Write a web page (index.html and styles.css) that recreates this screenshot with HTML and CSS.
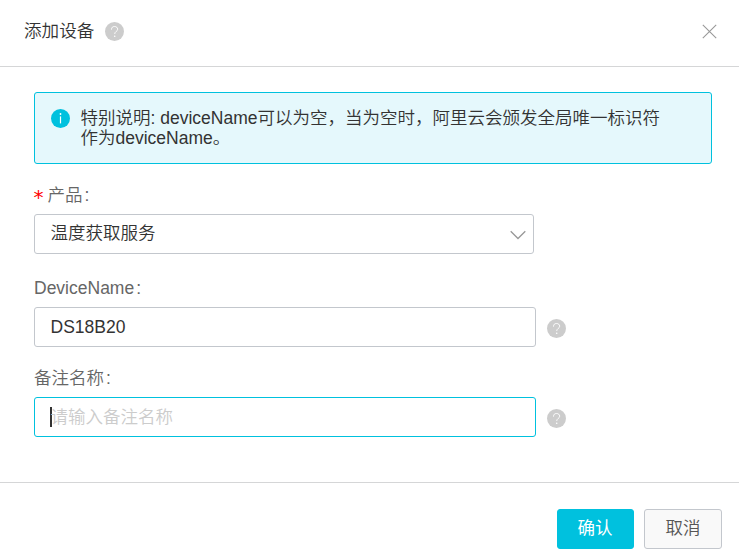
FILE: index.html
```html
<!DOCTYPE html>
<html lang="zh-CN">
<head>
<meta charset="utf-8">
<title>添加设备</title>
<link rel="stylesheet" href="styles.css">
</head>
<body>
<svg class="defs" width="0" height="0" aria-hidden="true">
  <symbol id="help" viewBox="0 0 19 19">
    <circle cx="9.5" cy="9.5" r="9.5" fill="#ccc"/>
    <path d="M6.5 7.6C6.500 5.500 7.700 4.500 9.500 4.500s3.200 1.100 3.200 2.700c0 2-3 2.500-3 4.700" fill="none" stroke="#fff" stroke-width="1"/>
    <circle cx="9.7" cy="14.300" r=".8" fill="#fff"/>
  </symbol>
</svg>
<div class="dialog">
  <header class="header">
    <h1 class="title">添加设备</h1>
    <svg class="help"><use href="#help"/></svg>
    <svg class="close" viewBox="0 0 15 15"><path d="M.8 .8l13.400 13.400M14.200 .8l-13.400 13.400"/></svg>
  </header>
  <main class="body">
    <div class="notice">
      <svg class="info" viewBox="0 0 19 19"><circle cx="9.5" cy="9.5" r="9.5" fill="#00c1de"/><path d="M9.5 7.4v7" stroke="#fff" stroke-width="1.2"/><circle cx="9.5" cy="5" r=".9" fill="#fff"/></svg>
      <p class="notice-text">特别说明: deviceName可以为空，当为空时，阿里云会颁发全局唯一标识符<br>作为deviceName。</p>
    </div>
    <div class="field product">
      <div class="label"><span class="required">*</span>产品<span class="colon">:</span></div>
      <div class="control select"><span>温度获取服务</span><svg class="chevron" viewBox="0 0 16 10"><path d="M.7 1.2L8 8.5l7.300-7.300"/></svg></div>
    </div>
    <div class="field device">
      <div class="label">DeviceName<span class="colon">:</span></div>
      <div class="row"><div class="control">DS18B20</div><svg class="help"><use href="#help"/></svg></div>
    </div>
    <div class="field remark">
      <div class="label">备注名称<span class="colon">:</span></div>
      <div class="row"><div class="control focused"><span class="caret"></span><span class="placeholder">请输入备注名称</span></div><svg class="help"><use href="#help"/></svg></div>
    </div>
  </main>
  <footer class="footer">
    <button class="btn primary">确认</button>
    <button class="btn">取消</button>
  </footer>
</div>
</body>
</html>
```
FILE: styles.css
```css
* { box-sizing: border-box; }
body {
  margin: 0;
  background: #fff;
  color: #333;
  font: 350 17.5px/20px "Liberation Sans", "Noto Sans CJK SC", sans-serif;
}
svg { display: block; flex: none; }
.defs { position: absolute; }
.dialog { height: 560px; display: flex; flex-direction: column; }
.header {
  height: 67px;
  padding: 0 22px 4px 24px;
  display: flex;
  align-items: center;
  border-bottom: 1px solid #d5d6d7;
}
.title { margin: 0; font-size: 17.6px; font-weight: inherit; }
.help { width: 19px; height: 19px; margin-left: 11px; }
.header .help { margin-top: 1px; }
.close { width: 15px; height: 15px; margin-left: auto; }
.close path { fill: none; stroke: #999; stroke-width: 1.1; }
.body { height: 415px; padding: 25px 27px 0 34px; }
.notice {
  height: 72px;
  padding: 15px 16px;
  display: flex;
  border: 1px solid #00c1de;
  border-radius: 3px;
  background: #e5f8fc;
}
.info { width: 19px; height: 19px; margin-top: 1px; }
.notice-text { margin: 0 0 0 10.5px; white-space: nowrap; }
.label { height: 19px; color: #666; }
.required {
  display: inline-block;
  width: 13.5px;
  height: 16px;
  color: #f00;
  font: 400 20px/24px "DejaVu Sans", sans-serif;
  text-indent: -.5px;
  vertical-align: top;
}
.colon { margin-left: 2px; }
.product { margin-top: 21px; }
.device { margin-top: 24px; }
.remark { margin-top: 21px; }
.row { display: flex; align-items: center; }
.control {
  width: 502px;
  height: 40px;
  margin-top: 10px;
  padding: 0 7px 0 15.5px;
  display: flex;
  align-items: center;
  border: 1px solid #c3c7cd;
  border-radius: 3px;
}
.row .help { margin-top: 13px; }
.select { width: 500px; padding-bottom: 2px; justify-content: space-between; }
.chevron { width: 16px; height: 10px; margin-top: 4px; }
.chevron path { fill: none; stroke: #999; stroke-width: 1.3; }
.focused { border-color: #00c1de; }
.caret { width: 2px; height: 20px; margin: 0 -1.5px 0 -.5px; background: #333; }
.placeholder { color: #ccc; }
.footer {
  flex: 1;
  padding: 26px 17px 0;
  display: flex;
  justify-content: flex-end;
  gap: 10px;
  border-top: 1px solid #d5d6d7;
}
.btn {
  width: 78px;
  height: 40px;
  padding: 0 0 2px;
  border: 1px solid #c3c7cd;
  border-radius: 3px;
  background: #f9f9f9;
  color: #555;
  font: inherit;
}
.primary { width: 77px; padding-right: 1px; border-color: #00c1de; background: #00c1de; color: #fff; font-weight: 400; }
```
